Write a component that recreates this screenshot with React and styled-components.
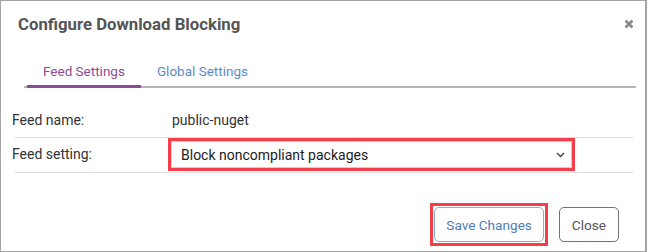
import React, { useState } from 'react';
import styled, { createGlobalStyle } from 'styled-components';

const GlobalStyle = createGlobalStyle`
  html, body {
    margin: 0;
    padding: 0;
    background: #fff;
  }
  body {
    font-family: Roboto, "Liberation Sans", Arial, sans-serif;
  }
`;

const Dialog = styled.div`
  box-sizing: border-box;
  width: 647px;
  height: 252px;
  border: 1px solid #a4a4a4;
  border-right-width: 2px;
  background: #fff;
  display: flex;
  flex-direction: column;
`;

const Header = styled.div`
  display: flex;
  align-items: center;
  justify-content: space-between;
  padding: 13px 10px 0 17px;
`;

const Title = styled.h2`
  margin: 0;
  font-size: 16.75px;
  line-height: 20px;
  font-weight: 700;
  color: #555;
`;

const CloseX = styled.button`
  border: 0;
  background: none;
  padding: 0;
  width: 12px;
  height: 12px;
  display: flex;
  align-items: center;
  justify-content: center;
  cursor: pointer;
`;

const TabList = styled.div`
  display: flex;
  margin: 19px 9px 0 23px;
  border-bottom: 2px solid #b4b4b4;
`;

const Tab = styled.button`
  border: 0;
  background: none;
  margin: 0 0 ${(p) => (p.$active ? '-2px' : '0')} ${(p) => (p.$active ? '3px' : '0')};
  padding: 10px 16px ${(p) => (p.$active ? '6px' : '7px')};
  font-family: inherit;
  font-size: 13.5px;
  line-height: 16px;
  color: ${(p) => (p.$active ? '#8c4b99' : '#5b8bc5')};
  border-bottom: ${(p) => (p.$active ? '3px solid #8c4b99' : '0')};
  cursor: pointer;
`;

const Form = styled.div`
  margin: 15px 12px 0 14px;
`;

const Row = styled.div`
  display: grid;
  grid-template-columns: 153px 1fr;
  align-items: ${(p) => (p.$top ? 'start' : 'center')};
  height: 34px;
  border-bottom: 1px solid #dedede;
`;

const Label = styled.div`
  margin-left: -3px;
  font-size: 14px;
  line-height: ${(p) => p.$lh || 'normal'};
  color: #333;
`;

const Value = styled.div`
  padding-left: 4px;
  font-size: 14px;
  color: #333;
`;

const Highlight = styled.span`
  display: inline-flex;
  border: 3px solid #f2404a;
  padding: ${(p) => p.$gap || 0};
`;

const SelectBox = styled.div`
  box-sizing: border-box;
  width: 401px;
  height: 27px;
  border: 1px solid #cfcfcf;
  display: flex;
  align-items: center;
  padding: 0 6px 0 9px;
  font-size: 14px;
  color: #222;
`;

const Chevron = styled.span`
  margin-left: auto;
  display: flex;
`;

const Footer = styled.div`
  display: flex;
  justify-content: flex-end;
  align-items: center;
  gap: 11px;
  margin-top: 30px;
  padding-right: 26px;
`;

const Button = styled.button`
  box-sizing: border-box;
  height: 35px;
  padding: 0 ${(p) => (p.$primary ? '11px' : '12px')};
  border: 1px solid ${(p) => (p.$primary ? '#8fabd2' : '#6e7378')};
  border-radius: 5px;
  background: #fff;
  font-family: inherit;
  font-size: 13.6px;
  color: ${(p) => (p.$primary ? '#4f7db7' : '#555')};
  cursor: pointer;
`;

export default function App() {
  const [tab, setTab] = useState('feed');
  return (
    <>
      <GlobalStyle />
      <Dialog>
        <Header>
          <Title>Configure Download Blocking</Title>
          <CloseX aria-label="Close">
            <svg width="10" height="10" viewBox="0 0 10 10">
              <path d="M1.5 1.5 L8.5 8.5 M8.5 1.5 L1.5 8.5" stroke="#8a8a8a" strokeWidth="2.6" />
            </svg>
          </CloseX>
        </Header>
        <TabList>
          <Tab $active={tab === 'feed'} onClick={() => setTab('feed')}>Feed Settings</Tab>
          <Tab $active={tab === 'global'} onClick={() => setTab('global')}>Global Settings</Tab>
        </TabList>
        <Form>
          <Row>
            <Label>Feed name:</Label>
            <Value>public-nuget</Value>
          </Row>
          <Row $top>
            <Label $lh="33px">Feed setting:</Label>
            <div>
              <Highlight>
                <SelectBox>
                  Block noncompliant packages
                  <Chevron>
                    <svg width="9" height="6" viewBox="0 0 9 6">
                      <path d="M1 1 L4.5 4.5 L8 1" fill="none" stroke="#444" strokeWidth="1.4" />
                    </svg>
                  </Chevron>
                </SelectBox>
              </Highlight>
            </div>
          </Row>
        </Form>
        <Footer>
          <Highlight $gap="1px">
            <Button $primary>Save Changes</Button>
          </Highlight>
          <Button>Close</Button>
        </Footer>
      </Dialog>
    </>
  );
}
